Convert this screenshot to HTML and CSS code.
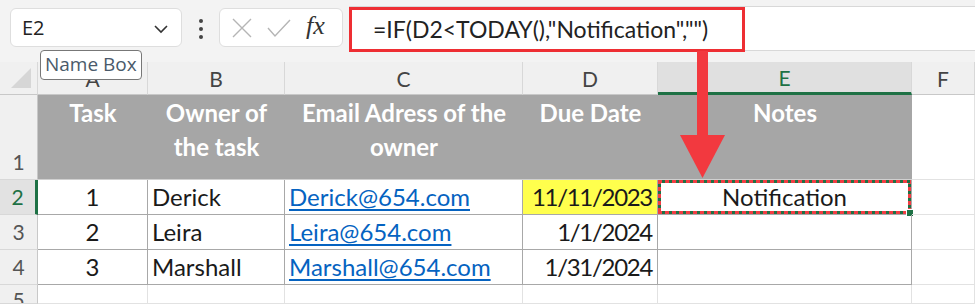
FILE: index.html
```html
<!DOCTYPE html>
<html lang="en">
<head>
    <meta charset="UTF-8">
    <title>Excel - IF TODAY notification</title>
    <link rel="stylesheet" href="styles.css">
</head>
<body>

<div class="toolbar">
    <div class="namebox">
        <span>E2</span>
        <svg class="chevron" width="16" height="10" viewBox="0 0 16 10"><path d="M2 2 L8 8 L14 2" fill="none" stroke="#333" stroke-width="1.6"/></svg>
    </div>
    <div class="dots"><i></i><i></i><i></i></div>
    <div class="fxbox">
        <svg width="24" height="24" viewBox="0 0 24 24"><path d="M3 3 L21 21 M21 3 L3 21" stroke="#b5b5b5" stroke-width="1.4" fill="none"/></svg>
        <svg width="26" height="24" viewBox="0 0 26 24"><path d="M2 12 L9 20 L24 4" stroke="#b5b5b5" stroke-width="1.4" fill="none"/></svg>
        <span class="fx">fx</span>
    </div>
    <div class="formulabar">
        <div class="formula">=IF(D2&lt;TODAY(),"Notification","")</div>
    </div>
    <div class="tooltip">Name Box</div>
</div>

<div class="sheet">
    <div class="colhead corner"><svg width="22" height="24" viewBox="0 0 22 24"><path d="M20 2 L20 22 L0 22 Z" fill="#d6d6d6"/></svg></div>
    <div class="colhead">A</div>
    <div class="colhead">B</div>
    <div class="colhead">C</div>
    <div class="colhead">D</div>
    <div class="colhead selected">E</div>
    <div class="colhead">F</div>

    <div class="rowhead">1</div>
    <div class="cell th">Task</div>
    <div class="cell th">Owner of<br>the task</div>
    <div class="cell th">Email Adress of the<br>owner</div>
    <div class="cell th">Due Date</div>
    <div class="cell th">Notes</div>
    <div class="cell blank"></div>

    <div class="rowhead selected">2</div>
    <div class="cell td center">1</div>
    <div class="cell td">Derick</div>
    <div class="cell td"><span class="link">Derick@654.com</span></div>
    <div class="cell td date yellow">11/11/2023</div>
    <div class="cell td center active">Notification<span class="handle"></span></div>
    <div class="cell blank"></div>

    <div class="rowhead">3</div>
    <div class="cell td center">2</div>
    <div class="cell td">Leira</div>
    <div class="cell td"><span class="link">Leira@654.com</span></div>
    <div class="cell td date">1/1/2024</div>
    <div class="cell td"></div>
    <div class="cell blank"></div>

    <div class="rowhead">4</div>
    <div class="cell td center">3</div>
    <div class="cell td">Marshall</div>
    <div class="cell td"><span class="link">Marshall@654.com</span></div>
    <div class="cell td date">1/31/2024</div>
    <div class="cell td"></div>
    <div class="cell blank"></div>

    <div class="rowhead last">5</div>
    <div class="cell blank"></div>
    <div class="cell blank"></div>
    <div class="cell blank"></div>
    <div class="cell blank"></div>
    <div class="cell blank"></div>
    <div class="cell blank"></div>
</div>

<svg class="arrow" width="60" height="140" viewBox="0 0 60 140">
    <rect x="18" y="0" width="11" height="90" fill="#f2393f"/>
    <path d="M1 84 L46 84 L23.5 127 Z" fill="#f2393f"/>
</svg>

</body>
</html>
```

FILE: styles.css
```css
body {
    margin: 0;
    width: 975px;
    height: 304px;
    overflow: hidden;
    background: #fff;
    font-family: Lato, "Open Sans", sans-serif;
    position: relative;
}
.toolbar {
    height: 62px;
    background: #f3f3f3;
    display: flex;
    align-items: flex-start;
    padding-left: 10px;
    box-sizing: border-box;
    position: relative;
}
.namebox {
    margin-top: 8px;
    width: 172px;
    height: 39px;
    background: #fff;
    border: 1px solid #dedede;
    border-radius: 6px;
    box-sizing: border-box;
    display: flex;
    align-items: center;
    justify-content: space-between;
    padding: 0 12px 0 11px;
    font-family: "Open Sans", sans-serif;
    font-size: 20px;
    color: #222;
}
.chevron {
    margin-top: 3px;
}
.dots {
    width: 37px;
    display: flex;
    flex-direction: column;
    align-items: center;
    gap: 4px;
    margin-top: 19px;
}
.dots i {
    width: 4px;
    height: 4px;
    border-radius: 2px;
    background: #444;
}
.fxbox {
    margin-top: 8px;
    width: 124px;
    height: 39px;
    background: #fff;
    border: 1px solid #dedede;
    border-radius: 6px;
    box-sizing: border-box;
    display: flex;
    align-items: center;
    gap: 12px;
    padding-left: 10px;
}
.fx {
    font-family: "Liberation Serif", serif;
    font-style: italic;
    font-size: 26px;
    color: #333;
    margin-left: 2px;
    margin-bottom: 4px;
}
.formulabar {
    flex: 1;
    margin: 6px 0 0 6px;
    height: 43px;
    background: #fff;
    border-top: 1px solid #d8d8d8;
    border-bottom: 1px solid #d8d8d8;
    position: relative;
}
.formula {
    position: absolute;
    left: 0;
    top: 0;
    width: 396px;
    height: 45px;
    border: 3px solid #ee2e33;
    box-sizing: border-box;
    padding-left: 21px;
    line-height: 39px;
    font-size: 23px;
    color: #222;
}
.tooltip {
    position: absolute;
    left: 40px;
    top: 50px;
    height: 28px;
    padding: 0 4px;
    background: #fff;
    border: 1px solid #777;
    border-radius: 4px;
    font-family: "Open Sans", sans-serif;
    font-size: 19px;
    line-height: 26px;
    color: #4a5a6a;
    z-index: 2;
}
.sheet {
    display: grid;
    grid-template-columns: 38px 110px 137px 238px 135px 254px 63px;
    grid-template-rows: 33px 85px 35px 35px 35px 19px;
}
.colhead {
    background: #f0f0f0;
    border-right: 1px solid #d8d8d8;
    border-bottom: 1px solid #c8c8c8;
    display: flex;
    align-items: center;
    justify-content: center;
    font-size: 21px;
    color: #444;
    box-sizing: border-box;
}
.colhead.corner {
    justify-content: flex-end;
    padding-right: 4px;
    align-items: flex-end;
    padding-bottom: 4px;
}
.colhead.selected {
    background: #e0e0e0;
    color: #1e7145;
    border-bottom: 3px solid #1e7145;
}
.rowhead {
    background: #f0f0f0;
    border-bottom: 1px solid #d8d8d8;
    border-right: 1px solid #c8c8c8;
    display: flex;
    align-items: flex-end;
    justify-content: center;
    line-height: 34px;
    font-size: 21px;
    color: #555;
    box-sizing: border-box;
}
.rowhead.selected {
    background: #e2e2e2;
    color: #1e7145;
    border-right: 3px solid #1e7145;
}
.rowhead.last {
    align-items: flex-start;
    line-height: 24px;
    padding-top: 3px;
    overflow: hidden;
}
.cell {
    box-sizing: border-box;
    font-size: 24px;
    color: #1a1a1a;
    display: flex;
    align-items: flex-end;
    line-height: 34px;
    white-space: nowrap;
    position: relative;
}
.th {
    background: #a6a6a6;
    color: #fff;
    font-weight: bold;
    text-align: center;
    justify-content: center;
    align-items: flex-start;
    padding-top: 1px;
    border-bottom: 1px solid #d0d0d0;
}
.td {
    border-right: 1px solid #a8a8a8;
    border-bottom: 1px solid #a8a8a8;
    padding: 0 4px;
}
.blank {
    border-right: 1px solid #e2e2e2;
    border-bottom: 1px solid #e2e2e2;
}
.center {
    justify-content: center;
}
.date {
    justify-content: flex-end;
    letter-spacing: -1.3px;
    padding-right: 5px;
}
.yellow {
    background: #ffff4d;
}
.link {
    color: #0563c1;
    text-decoration: underline;
    text-underline-offset: 3px;
}
.active {
    background:
        repeating-linear-gradient(90deg, #f23d43 0 4px, #1e7145 4px 7px) top left / 100% 3px no-repeat,
        repeating-linear-gradient(90deg, #f23d43 0 4px, #1e7145 4px 7px) bottom left / 100% 3px no-repeat,
        repeating-linear-gradient(180deg, #f23d43 0 4px, #1e7145 4px 7px) top left / 3px 100% no-repeat,
        repeating-linear-gradient(180deg, #f23d43 0 4px, #1e7145 4px 7px) top right / 3px 100% no-repeat,
        #fff;
}
.handle {
    position: absolute;
    right: -3px;
    bottom: -3px;
    width: 6px;
    height: 6px;
    background: #1e7145;
    border: 1px solid #fff;
}
.arrow {
    position: absolute;
    left: 679px;
    top: 51px;
    z-index: 3;
}
```
